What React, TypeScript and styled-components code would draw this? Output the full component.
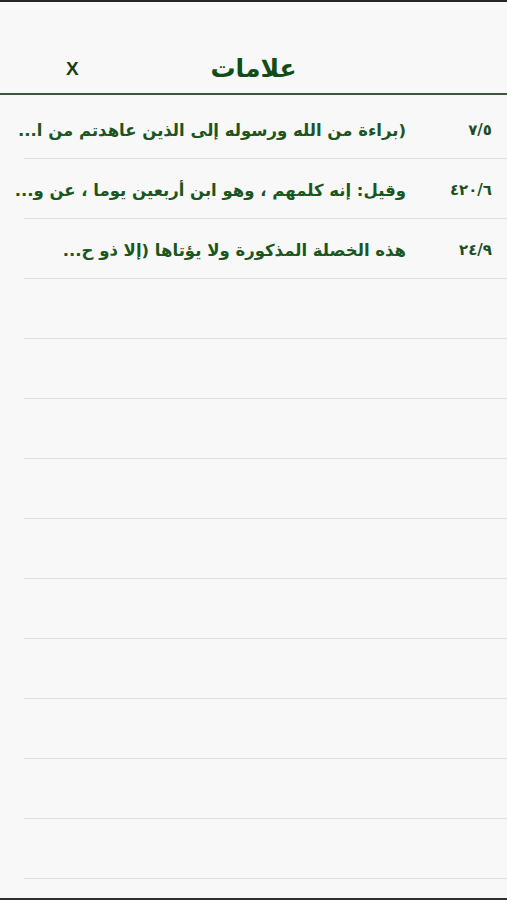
import React from 'react';
import styled, { createGlobalStyle } from 'styled-components';

interface Bookmark {
    ref: string;
    text: string;
}

const bookmarks: Bookmark[] = [
    { ref: '٧/٥', text: '(براءة من الله ورسوله إلى الذين عاهدتم من ا...' },
    { ref: '٤٢٠/٦', text: 'وقيل: إنه كلمهم ، وهو ابن أربعين يوما ، عن و...' },
    { ref: '٢٤/٩', text: 'هذه الخصلة المذكورة ولا يؤتاها (إلا ذو ح...' },
];

const ROWS = 13;

export default function App() {
    const rows = Array.from({ length: ROWS }, (_, i) => bookmarks[i]);

    return (<>
        <GlobalStyle />
        <Screen dir="rtl">
            <Header>
                <Spacer />
                <Title>علامات</Title>
                <Close>X</Close>
            </Header>
            <List>
                { rows.map((b, i) => <Row key={i}>
                    { b && <>
                        <Ref dir="ltr">{ b.ref }</Ref>
                        <Excerpt>{ b.text }</Excerpt>
                    </> }
                </Row>) }
            </List>
        </Screen>
    </>);
}

const GlobalStyle = createGlobalStyle`
    html, body {
        margin: 0;
        padding: 0;
        background: #f8f8f8;
    }
    body {
        font-family: "DejaVu Sans", "Noto Sans", sans-serif;
    }
`;

const Screen = styled.div`
    height: 900px;
    box-sizing: border-box;
    border-top: 2px solid #262626;
    border-bottom: 2px solid #2e2e2e;
    background: #f8f8f8;
    display: flex;
    flex-direction: column;
    overflow: hidden;
`;

const Header = styled.div`
    height: 93px;
    flex: none;
    box-sizing: border-box;
    border-bottom: 2px solid #3d553d;
    display: grid;
    grid-template-columns: 1fr auto 1fr;
    align-items: end;
    padding-bottom: 9px;
`;

const Spacer = styled.div``;

const Title = styled.h1`
    margin: 0;
    font-size: 25px;
    font-weight: bold;
    color: #124d16;
    line-height: 30px;
`;

const Close = styled.div`
    justify-self: end;
    margin-left: 66px;
    font-size: 19px;
    font-weight: bold;
    color: #163f16;
    line-height: 30px;
    font-family: "Liberation Sans", sans-serif;
`;

const List = styled.div`
    padding-top: 4px;
    display: flex;
    flex-direction: column;
`;

const Row = styled.div`
    height: 60px;
    flex: none;
    box-sizing: border-box;
    display: flex;
    align-items: center;
    padding-right: 15px;
    padding-top: 3px;
    padding-bottom: 1px;
    background: linear-gradient(#e0e0e0, #e0e0e0) no-repeat left 24px bottom / calc(100% - 24px) 1px;
`;

const Ref = styled.span`
    width: 86px;
    flex: none;
    text-align: right;
    font-size: 15px;
    font-weight: bold;
    color: #1b4f1f;
`;

const Excerpt = styled.span`
    font-size: 16.5px;
    font-weight: bold;
    color: #1a561e;
    white-space: nowrap;
`;
